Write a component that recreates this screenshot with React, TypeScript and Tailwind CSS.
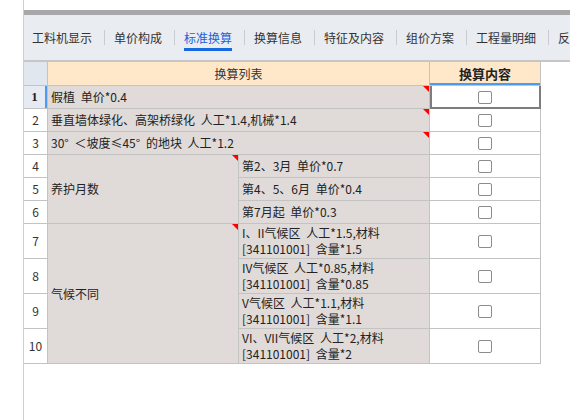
import React from 'react';

const tabs = ['工料机显示', '单价构成', '标准换算', '换算信息', '特征及内容', '组价方案', '工程量明细', '反'];

function Tri() {
  return (
    <span className="absolute right-0 top-0 h-0 w-0 border-l-[6px] border-t-[6px] border-l-transparent border-t-[#ff0000]" />
  );
}

function Check() {
  return <span className="block h-[13px] w-[14px] rounded-[2px] border border-[#8c8c8c] bg-white" />;
}

const numCell = 'flex items-center justify-center bg-white text-[12px] text-[#333]';
const greyCell =
  'relative flex items-center bg-[#e0dbd8] pl-[3px] text-[12px] text-[#222] whitespace-nowrap [word-spacing:3px]';
const checkCell = 'flex items-center justify-center bg-white';

export default function App() {
  const single: { n: number; text: string }[] = [
    { n: 1, text: '假植 单价*0.4' },
    { n: 2, text: '垂直墙体绿化、高架桥绿化 人工*1.4,机械*1.4' },
    { n: 3, text: '30° ＜坡度≤45° 的地块 人工*1.2' },
  ];
  const months = ['第2、3月 单价*0.7', '第4、5、6月 单价*0.4', '第7月起 单价*0.3'];
  const climate = [
    ['I、II气候区 人工*1.5,材料', '[341101001] 含量*1.5'],
    ['IV气候区 人工*0.85,材料', '[341101001] 含量*0.85'],
    ['V气候区 人工*1.1,材料', '[341101001] 含量*1.1'],
    ['VI、VII气候区 人工*2,材料', '[341101001] 含量*2'],
  ];

  return (
    <div
      className="flex h-[420px] w-[570px] overflow-hidden bg-white"
      style={{ fontFamily: '"Noto Sans CJK SC", "Liberation Sans", sans-serif' }}
    >
      <div className="w-[23px] shrink-0 bg-white" />
      <div className="flex flex-1 flex-col border-l border-[#cfcfcf]">
        <div className="h-[10px] bg-white" />
        <div className="h-[5px] bg-[#a8a8aa]" />
        {/* tab strip */}
        <div className="flex h-[47px] items-center border-b-2 border-[#c6c6c6] bg-[#e9ecf0] pl-[8px] whitespace-nowrap">
          {tabs.map((t, i) => (
            <div key={t} className="flex items-center">
              <span
                className={`relative text-[12px] leading-[17px] ${
                  i === 2 ? 'text-[#1e5fd9]' : 'text-[#333]'
                }`}
              >
                {t}
                {i === 2 && <span className="absolute -bottom-[5px] left-0 right-0 h-[3px] bg-[#1769e0]" />}
              </span>
              {i < tabs.length - 1 && <span className="ml-[12px] mr-[9px] h-[15px] w-px bg-[#c9cdd3]" />}
            </div>
          ))}
        </div>

        {/* conversion grid */}
        <div className="grid w-[517px] grid-cols-[23px_190px_190px_110px] grid-rows-[23px_repeat(6,22px)_repeat(4,34px)] gap-px bg-[#c3c3c3] pb-px pr-px">
          <div className="bg-[#e1e7ef]" />
          <div className="col-span-2 flex items-center justify-center bg-[#ffe8c9] text-[12px] text-[#333]">换算列表</div>
          <div className="flex items-center justify-center border-b-2 border-[#4b9bf0] bg-[#ffe8c9] pt-[2px] text-[13px] font-bold text-[#222]">
            换算内容
          </div>

          {single.map((r) => (
            <React.Fragment key={r.n}>
              <div
                className={
                  r.n === 1
                    ? 'flex items-center justify-center border-r-2 border-[#4b9bf0] bg-[#e6eaf2] text-[13px] font-bold text-[#222]'
                    : numCell
                }
                style={r.n === 1 ? { fontFamily: '"Liberation Serif", serif' } : undefined}
              >
                {r.n}
              </div>
              <div className={`${greyCell} col-span-2`}>
                {r.text}
                <Tri />
              </div>
              <div className={`${checkCell} relative`}>
                {r.n === 1 && <span className="absolute -bottom-px -right-px left-0 top-0 border-2 border-t-0 border-[#7d7d7d]" />}
                <Check />
              </div>
            </React.Fragment>
          ))}

          {months.map((m, i) => (
            <React.Fragment key={m}>
              <div className={numCell}>{4 + i}</div>
              {i === 0 && (
                <div className={`${greyCell} row-span-3`}>
                  养护月数
                  <Tri />
                </div>
              )}
              <div className={greyCell}>{m}</div>
              <div className={checkCell}>
                <Check />
              </div>
            </React.Fragment>
          ))}

          {climate.map((c, i) => (
            <React.Fragment key={c[0]}>
              <div className={numCell}>{7 + i}</div>
              {i === 0 && (
                <div className={`${greyCell} row-span-4`}>
                  气候不同
                  <Tri />
                </div>
              )}
              <div className={`${greyCell} leading-[16px]`}>
                <div>
                  <div>{c[0]}</div>
                  <div>{c[1]}</div>
                </div>
              </div>
              <div className={checkCell}>
                <Check />
              </div>
            </React.Fragment>
          ))}
        </div>
        <div className="flex-1 bg-white" />
      </div>
    </div>
  );
}
